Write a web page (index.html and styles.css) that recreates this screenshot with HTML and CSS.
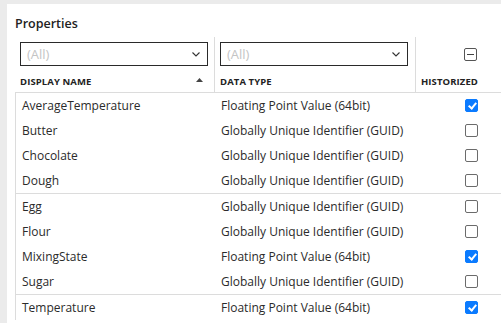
FILE: index.html
```html
<!DOCTYPE html>
<html>
<head>
<meta charset="utf-8">
<link rel="stylesheet" href="styles.css">
</head>
<body>
<div class="panel">
  <div class="title">Properties</div>
  <div class="table">
    <div class="head">
      <div class="hcell c1">
        <div class="select"><span class="ph">(All)</span>
          <svg class="chev" width="8" height="5" viewBox="0 0 8 5"><path d="M0.5 0.5 L4 4 L7.5 0.5" fill="none" stroke="#333" stroke-width="1.1"/></svg>
        </div>
        <div class="label wide"><span>DISPLAY NAME</span>
          <svg class="sort" width="7" height="4" viewBox="0 0 7 4"><path d="M0 4 L3.5 0 L7 4 Z" fill="#444"/></svg>
        </div>
      </div>
      <div class="hcell c2">
        <div class="select"><span class="ph">(All)</span>
          <svg class="chev" width="8" height="5" viewBox="0 0 8 5"><path d="M0.5 0.5 L4 4 L7.5 0.5" fill="none" stroke="#333" stroke-width="1.1"/></svg>
        </div>
        <div class="label"><span>DATA TYPE</span></div>
      </div>
      <div class="hcell c3">
        <div class="selall"><span class="minus"></span></div>
        <div class="label"><span>HISTORIZED</span></div>
      </div>
    </div>
    <div class="group">
      <div class="row"><span class="n">AverageTemperature</span><span class="t">Floating Point Value (64bit)</span><span class="k"><span class="cb on"></span></span></div>
      <div class="row"><span class="n">Butter</span><span class="t">Globally Unique Identifier (GUID)</span><span class="k"><span class="cb"></span></span></div>
      <div class="row"><span class="n">Chocolate</span><span class="t">Globally Unique Identifier (GUID)</span><span class="k"><span class="cb"></span></span></div>
      <div class="row"><span class="n">Dough</span><span class="t">Globally Unique Identifier (GUID)</span><span class="k"><span class="cb"></span></span></div>
    </div>
    <div class="group">
      <div class="row"><span class="n">Egg</span><span class="t">Globally Unique Identifier (GUID)</span><span class="k"><span class="cb"></span></span></div>
      <div class="row"><span class="n">Flour</span><span class="t">Globally Unique Identifier (GUID)</span><span class="k"><span class="cb"></span></span></div>
      <div class="row"><span class="n">MixingState</span><span class="t">Floating Point Value (64bit)</span><span class="k"><span class="cb on"></span></span></div>
      <div class="row"><span class="n">Sugar</span><span class="t">Globally Unique Identifier (GUID)</span><span class="k"><span class="cb"></span></span></div>
    </div>
    <div class="group">
      <div class="row"><span class="n">Temperature</span><span class="t">Floating Point Value (64bit)</span><span class="k"><span class="cb on"></span></span></div>
    </div>
  </div>
</div>
</body>
</html>
```
FILE: styles.css
```css
html, body {
  margin: 0;
  padding: 0;
  background: #ebebeb;
  font-family: "Open Sans", "Liberation Sans", sans-serif;
  color: #2b2b2b;
  overflow: hidden;
}
body {
  width: 501px;
  height: 323px;
}
.panel {
  margin: 4px 0 0 7px;
  background: #fff;
  height: 319px;
  padding: 0 0 0 8px;
}
.title {
  height: 33px;
  box-sizing: border-box;
  padding-top: 12px;
  font-size: 12.5px;
  font-weight: 600;
  line-height: 15px;
  color: #222;
}
.head {
  display: grid;
  grid-template-columns: 200px 201px 1fr;
  border-bottom: 1px solid #dcdcdc;
}
.hcell {
  display: flex;
  flex-direction: column;
  padding-top: 5px;
  padding-left: 5px;
  height: 55px;
  box-sizing: border-box;
  min-width: 0;
}
.c1, .c2 {
  border-right: 1px solid #dcdcdc;
}
.select {
  width: 188px;
  height: 24px;
  box-sizing: border-box;
  border: 1px solid #2a2a2a;
  display: flex;
  align-items: center;
  justify-content: space-between;
  padding: 0 7px 0 6px;
}
.ph {
  color: #c4c4c4;
  font-size: 13px;
}
.label {
  margin-top: 6px;
  height: 18px;
  display: flex;
  align-items: center;
  justify-content: space-between;
  font-size: 9.5px;
  font-weight: 700;
  color: #222;
  letter-spacing: 0.1px;
}
.label.wide {
  width: 183px;
}
.sort {
  margin-top: -3px;
}
.selall {
  height: 24px;
  display: flex;
  align-items: center;
  padding-left: 43px;
}
.minus {
  width: 11px;
  height: 11px;
  border: 1px solid #555;
  border-radius: 2px;
  position: relative;
  display: block;
}
.minus::after {
  content: "";
  position: absolute;
  left: 2px;
  right: 2px;
  top: 5px;
  height: 1px;
  background: #444;
}
.group {
  border-left: 1px solid #dcdcdc;
  border-bottom: 1px solid #dcdcdc;
}
.group:last-child {
  border-bottom: none;
}
.row {
  display: grid;
  grid-template-columns: 199px 201px 1fr;
  height: 25px;
  align-items: center;
  font-size: 12px;
}
.n {
  padding-left: 6px;
}
.t {
  padding-left: 6px;
}
.k {
  padding-left: 49px;
  display: flex;
}
.cb {
  width: 11px;
  height: 11px;
  border: 1px solid #6b6b6b;
  border-radius: 2px;
  display: block;
  position: relative;
}
.cb.on {
  background: #0b7bff;
  border-color: #0b7bff;
}
.cb.on::after {
  content: "";
  position: absolute;
  left: 3.5px;
  top: 1px;
  width: 3px;
  height: 6px;
  border: solid #fff;
  border-width: 0 2px 2px 0;
  transform: rotate(40deg);
}
```
